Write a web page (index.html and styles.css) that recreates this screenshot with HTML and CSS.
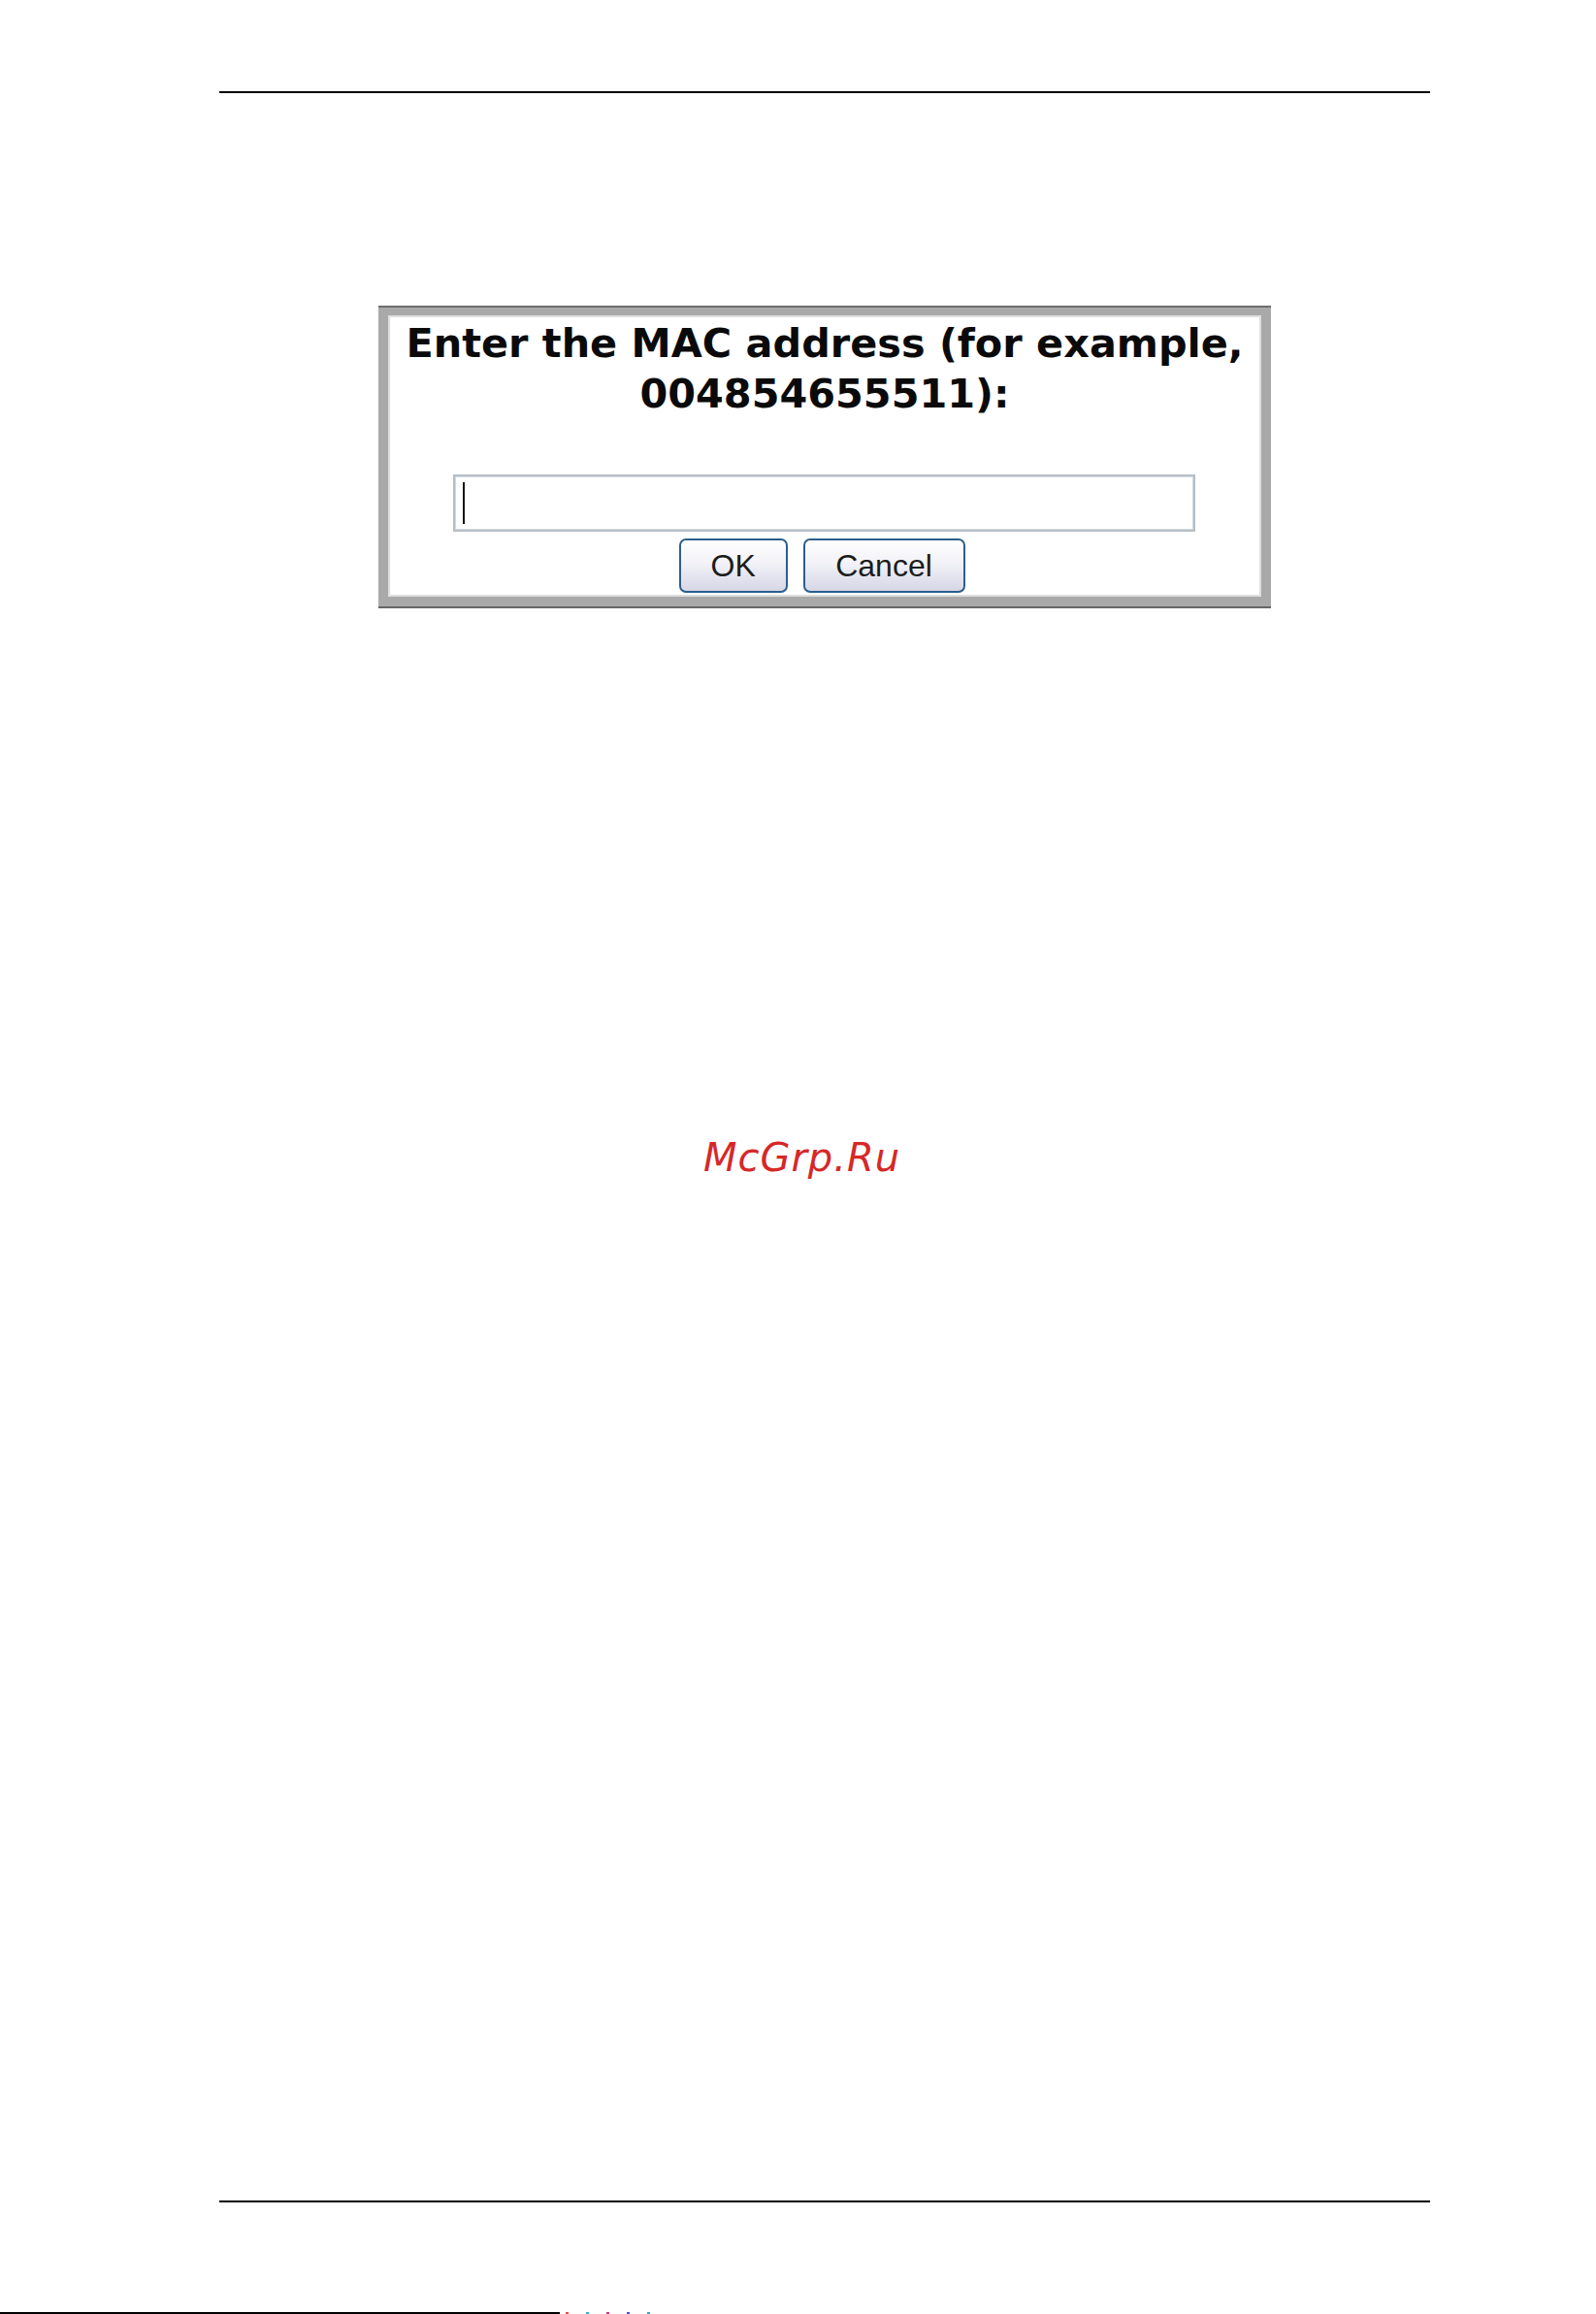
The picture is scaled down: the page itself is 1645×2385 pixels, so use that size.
FILE: index.html
```html
<!DOCTYPE html>
<html lang="en">
<head>
<meta charset="utf-8">
<title>Enter the MAC address</title>
<link rel="stylesheet" href="styles.css">
</head>
<body>
  <div class="page">
    <div class="rule-top"></div>
    <div class="dialog">
      <div class="frame">
        <div class="content">
          <p class="prompt">Enter the MAC address (for example,<br>004854655511):</p>
          <div class="field"><span class="caret"></span></div>
          <div class="actions">
            <button class="btn btn-ok" type="button">OK</button>
            <button class="btn btn-cancel" type="button">Cancel</button>
          </div>
        </div>
      </div>
    </div>
  </div>
  <div class="watermark">McGrp.Ru</div>
  <div class="page">
    <div class="rule-bottom"></div>
  </div>
  <div class="edge">
    <span class="edge-line"></span>
    <span class="edge-dots"><i class="d1"></i><i class="d2"></i><i class="d3"></i><i class="d4"></i><i class="d5"></i></span>
  </div>
</body>
</html>
```

FILE: styles.css
```css
html, body {
  margin: 0;
  padding: 0;
  background: #ffffff;
}

body {
  width: 1645px;
  font-family: "DejaVu Sans", Verdana, sans-serif;
}

.page {
  width: 1248px;
  margin-left: 226px;
}

.rule-top {
  margin-top: 94px;
  height: 2px;
  background: #000000;
}

.dialog {
  width: 920px;
  margin: 219px 0 0 164px;
  border-top: 2px solid #6e6e6e;
  border-bottom: 2px solid #666666;
}

.frame {
  border: 10px solid #a9a9a9;
  border-top-width: 8px;
  background: #ffffff;
  box-shadow: inset 0 0 0 2px #dedede;
}

.content {
  padding: 3px 0 4px;
}

.prompt {
  margin: 0;
  text-align: center;
  font-family: "DejaVu Sans", Verdana, sans-serif;
  font-weight: bold;
  font-size: 41.4px;
  line-height: 52px;
  color: #0a0a0a;
}

.field {
  box-sizing: border-box;
  width: 765px;
  height: 59px;
  margin: 57px 0 0 67px;
  border: 2px solid #b6bec6;
  box-shadow: inset 0 0 0 1px #d4d9de;
  padding: 6px 0 0 8px;
}

.caret {
  display: block;
  width: 2px;
  height: 43px;
  background: #111111;
}

.actions {
  display: flex;
  justify-content: center;
  gap: 16px;
  margin-top: 7px;
  padding-right: 6px;
}

.btn {
  box-sizing: border-box;
  height: 56px;
  padding: 0 31px;
  border: 2px solid #2d5e8c;
  border-radius: 7px;
  background: linear-gradient(#ffffff 0%, #f2f2f8 45%, #d6d6e6 100%);
  font-family: "Liberation Sans", Arial, sans-serif;
  font-size: 32px;
  color: #1c1c1c;
  line-height: 1;
}

.btn-ok {
  width: 112px;
}

.btn-cancel {
  width: 167px;
}

.watermark {
  margin-top: 542px;
  padding-left: 8px;
  text-align: center;
  font-family: "DejaVu Sans", sans-serif;
  font-style: italic;
  font-size: 40px;
  letter-spacing: 1px;
  line-height: 48px;
  color: #d62828;
}

.rule-bottom {
  margin-top: 1051px;
  height: 2px;
  background: #000000;
}

.edge {
  display: flex;
  align-items: flex-end;
  margin-top: 113px;
  height: 2px;
}

.edge-line {
  display: block;
  width: 577px;
  height: 2px;
  background: #000000;
}

.edge-dots {
  display: flex;
  gap: 18px;
  margin-left: 6px;
}

.edge-dots i {
  display: block;
  width: 3px;
  height: 2px;
}

.edge-dots .d1 { background: #e05050; }
.edge-dots .d2 { background: #40b0d0; }
.edge-dots .d3 { background: #c04080; }
.edge-dots .d4 { background: #5050d0; }
.edge-dots .d5 { background: #30b0c0; }
```
